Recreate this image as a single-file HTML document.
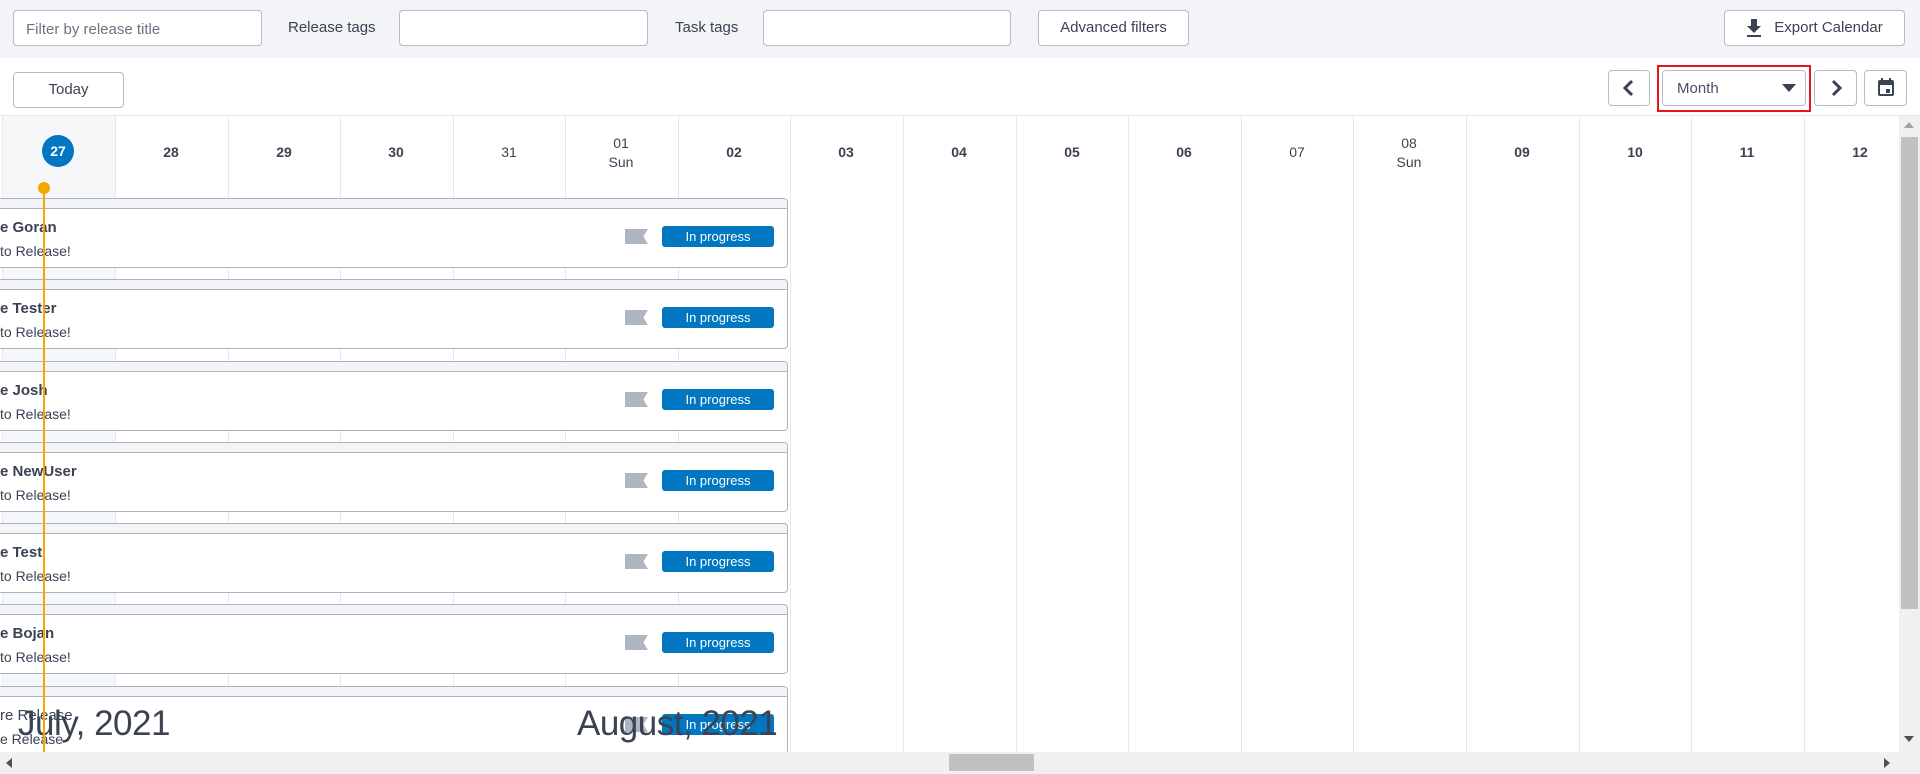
<!DOCTYPE html>
<html><head><meta charset="utf-8"><style>
*{box-sizing:border-box;margin:0;padding:0}
body{width:1920px;height:774px;overflow:hidden;background:#fff;font-family:"Liberation Sans",sans-serif;color:#3b4252;position:relative}
.a{position:absolute}
.top{left:0;top:0;width:1920px;height:58px;background:#f3f4f7}
.inp{position:absolute;top:10px;height:36px;border:1px solid #b5bac3;border-radius:4px;background:#fff;font-size:15px;color:#6b7280;padding:10px 12px}
.lbl{position:absolute;top:19px;font-size:15px;color:#3b4252}
.btn{position:absolute;border:1px solid #b5bac3;border-radius:4px;background:#fff;font-size:15px;color:#3b4252;text-align:center}
.vl{position:absolute;top:116px;width:1px;height:636px;background:#e6e8eb}
.hd{position:absolute;top:116px;width:112px;height:80px;text-align:center;font-size:14px;font-weight:bold;color:#3b4252}
.row{position:absolute;left:0;width:788px;height:70px;border:1px solid #aab3bf;border-left:none;border-radius:0 4px 4px 0;background:#fff}
.row .strip{position:absolute;left:0;right:0;top:0;height:10px;background:#f3f4f7;border-bottom:1px solid #aab3bf;border-radius:0 4px 0 0}
.row .t{position:absolute;left:0;top:20px;font-size:15px;font-weight:bold;color:#3b4252;white-space:nowrap}
.row .s{position:absolute;left:0;top:44px;font-size:14px;color:#3b4252;white-space:nowrap}
.row .fl{position:absolute;left:625px;top:30px;width:23px;height:15px;background:#aeb7c1;clip-path:polygon(0 0,100% 0,80% 50%,100% 100%,0 100%)}
.row .bd{position:absolute;left:662px;top:27px;width:112px;height:21px;background:#0077c0;border-radius:3px;color:#fff;font-size:13px;text-align:center;line-height:21px}
</style></head><body>
<div class="a top"></div>
<div class="inp" style="left:13px;width:249px">Filter by release title</div>
<div class="lbl" style="left:288px">Release tags</div>
<div class="inp" style="left:399px;width:249px"></div>
<div class="lbl" style="left:675px">Task tags</div>
<div class="inp" style="left:763px;width:248px"></div>
<div class="btn" style="left:1038px;top:10px;width:151px;height:36px;line-height:34px">Advanced filters</div>
<div class="btn" style="left:1724px;top:10px;width:181px;height:36px;line-height:34px;padding-left:28px">Export Calendar</div>
<svg class="a" style="left:1745px;top:18px" width="18" height="20" viewBox="0 0 18 20"><path d="M6 1h6v7h4l-7 7-7-7h4z" fill="#3b4252"/><rect x="2" y="17" width="14" height="2" fill="#3b4252"/></svg>

<div class="btn" style="left:13px;top:72px;width:111px;height:36px;line-height:34px">Today</div>
<div class="btn" style="left:1608px;top:70px;width:42px;height:36px"></div>
<svg class="a" style="left:1620px;top:78px" width="18" height="20" viewBox="0 0 18 20"><path d="M12 3L5 10l7 7" fill="none" stroke="#3b4252" stroke-width="3"/></svg>
<div class="a" style="left:1657px;top:65px;width:154px;height:47px;border:2px solid #e5141c"></div>
<div class="btn" style="left:1662px;top:70px;width:144px;height:36px;text-align:left;padding:9px 14px;font-size:15px;color:#4a4f6a">Month</div>
<svg class="a" style="left:1782px;top:84px" width="14" height="8"><path d="M0 0h14L7 8z" fill="#3b4252"/></svg>
<div class="btn" style="left:1814px;top:70px;width:43px;height:36px"></div>
<svg class="a" style="left:1827px;top:78px" width="18" height="20" viewBox="0 0 18 20"><path d="M6 3l7 7-7 7" fill="none" stroke="#3b4252" stroke-width="3"/></svg>
<div class="btn" style="left:1864px;top:70px;width:43px;height:36px"></div>
<svg class="a" style="left:1878px;top:78px" width="16" height="18" viewBox="0 0 16 18"><rect x="1" y="3" width="14" height="14" rx="1" fill="none" stroke="#3b4252" stroke-width="2"/><rect x="1" y="3" width="14" height="4" fill="#3b4252"/><rect x="3" y="0" width="2" height="4" fill="#3b4252"/><rect x="11" y="0" width="2" height="4" fill="#3b4252"/><rect x="8" y="11" width="4" height="4" fill="#3b4252"/></svg>

<div class="a" style="left:0;top:115px;width:1920px;height:1px;background:#e6e8eb"></div>
<div class="a" style="left:3px;top:116px;width:112px;height:636px;background:#f6f7f9"></div>
<div class="vl" style="left:2px"></div><div class="vl" style="left:115px"></div><div class="vl" style="left:228px"></div><div class="vl" style="left:340px"></div><div class="vl" style="left:453px"></div><div class="vl" style="left:565px"></div><div class="vl" style="left:678px"></div><div class="vl" style="left:790px"></div><div class="vl" style="left:903px"></div><div class="vl" style="left:1016px"></div><div class="vl" style="left:1128px"></div><div class="vl" style="left:1241px"></div><div class="vl" style="left:1353px"></div><div class="vl" style="left:1466px"></div><div class="vl" style="left:1579px"></div><div class="vl" style="left:1691px"></div><div class="vl" style="left:1804px"></div>

<div class="a" style="left:42px;top:135px;width:32px;height:32px;border-radius:50%;background:#0077c0;color:#fff;font-size:14px;font-weight:bold;text-align:center;line-height:32px">27</div>
<div class="hd" style="left:115px;top:144px">28</div>
<div class="hd" style="left:228px;top:144px">29</div>
<div class="hd" style="left:340px;top:144px">30</div>
<div class="hd" style="left:453px;top:144px;font-weight:normal">31</div>
<div class="hd" style="left:565px;top:134px;font-weight:normal;line-height:19px">01<br>Sun</div>
<div class="hd" style="left:678px;top:144px">02</div>
<div class="hd" style="left:790px;top:144px">03</div>
<div class="hd" style="left:903px;top:144px">04</div>
<div class="hd" style="left:1016px;top:144px">05</div>
<div class="hd" style="left:1128px;top:144px">06</div>
<div class="hd" style="left:1241px;top:144px;font-weight:normal">07</div>
<div class="hd" style="left:1353px;top:134px;font-weight:normal;line-height:19px">08<br>Sun</div>
<div class="hd" style="left:1466px;top:144px">09</div>
<div class="hd" style="left:1579px;top:144px">10</div>
<div class="hd" style="left:1691px;top:144px">11</div>
<div class="hd" style="left:1804px;top:144px">12</div>

<div class="row" style="top:198px"><div class="strip"></div><div class="t">e Goran</div><div class="s">to Release!</div><div class="fl"></div><div class="bd">In progress</div></div>
<div class="row" style="top:279px"><div class="strip"></div><div class="t">e Tester</div><div class="s">to Release!</div><div class="fl"></div><div class="bd">In progress</div></div>
<div class="row" style="top:361px"><div class="strip"></div><div class="t">e Josh</div><div class="s">to Release!</div><div class="fl"></div><div class="bd">In progress</div></div>
<div class="row" style="top:442px"><div class="strip"></div><div class="t">e NewUser</div><div class="s">to Release!</div><div class="fl"></div><div class="bd">In progress</div></div>
<div class="row" style="top:523px"><div class="strip"></div><div class="t">e Test</div><div class="s">to Release!</div><div class="fl"></div><div class="bd">In progress</div></div>
<div class="row" style="top:604px"><div class="strip"></div><div class="t">e Bojan</div><div class="s">to Release!</div><div class="fl"></div><div class="bd">In progress</div></div>
<div class="row" style="top:686px"><div class="strip"></div><div class="t" style="font-weight:normal">re Release</div><div class="s">e Release</div><div class="fl"></div><div class="bd">In progress</div></div>

<div class="a" style="left:18px;top:704px;font-size:35px;color:#3b4252;white-space:nowrap;letter-spacing:-0.5px">July, 2021</div>
<div class="a" style="left:577px;top:704px;font-size:35px;color:#3b4252;white-space:nowrap;letter-spacing:-0.5px">August, 2021</div>

<div class="a" style="left:43px;top:187px;width:2px;height:570px;background:#f7a600"></div>
<div class="a" style="left:38px;top:182px;width:12px;height:12px;border-radius:50%;background:#f7a600"></div>

<div class="a" style="left:1899px;top:116px;width:21px;height:636px;background:#f0f0f0"></div>
<div class="a" style="left:1901px;top:137px;width:17px;height:472px;background:#c1c1c1"></div>
<svg class="a" style="left:1904px;top:122px" width="10" height="6"><path d="M0 6L5 0l5 6z" fill="#a3a3a3"/></svg>
<svg class="a" style="left:1904px;top:736px" width="10" height="6"><path d="M0 0h10L5 6z" fill="#505050"/></svg>
<div class="a" style="left:0;top:752px;width:1920px;height:22px;background:#f0f0f0"></div>
<div class="a" style="left:949px;top:754px;width:85px;height:17px;background:#c1c1c1"></div>
<svg class="a" style="left:6px;top:758px" width="6" height="10"><path d="M6 0v10L0 5z" fill="#505050"/></svg>
<svg class="a" style="left:1884px;top:758px" width="6" height="10"><path d="M0 0v10l6-5z" fill="#505050"/></svg>
</body></html>
